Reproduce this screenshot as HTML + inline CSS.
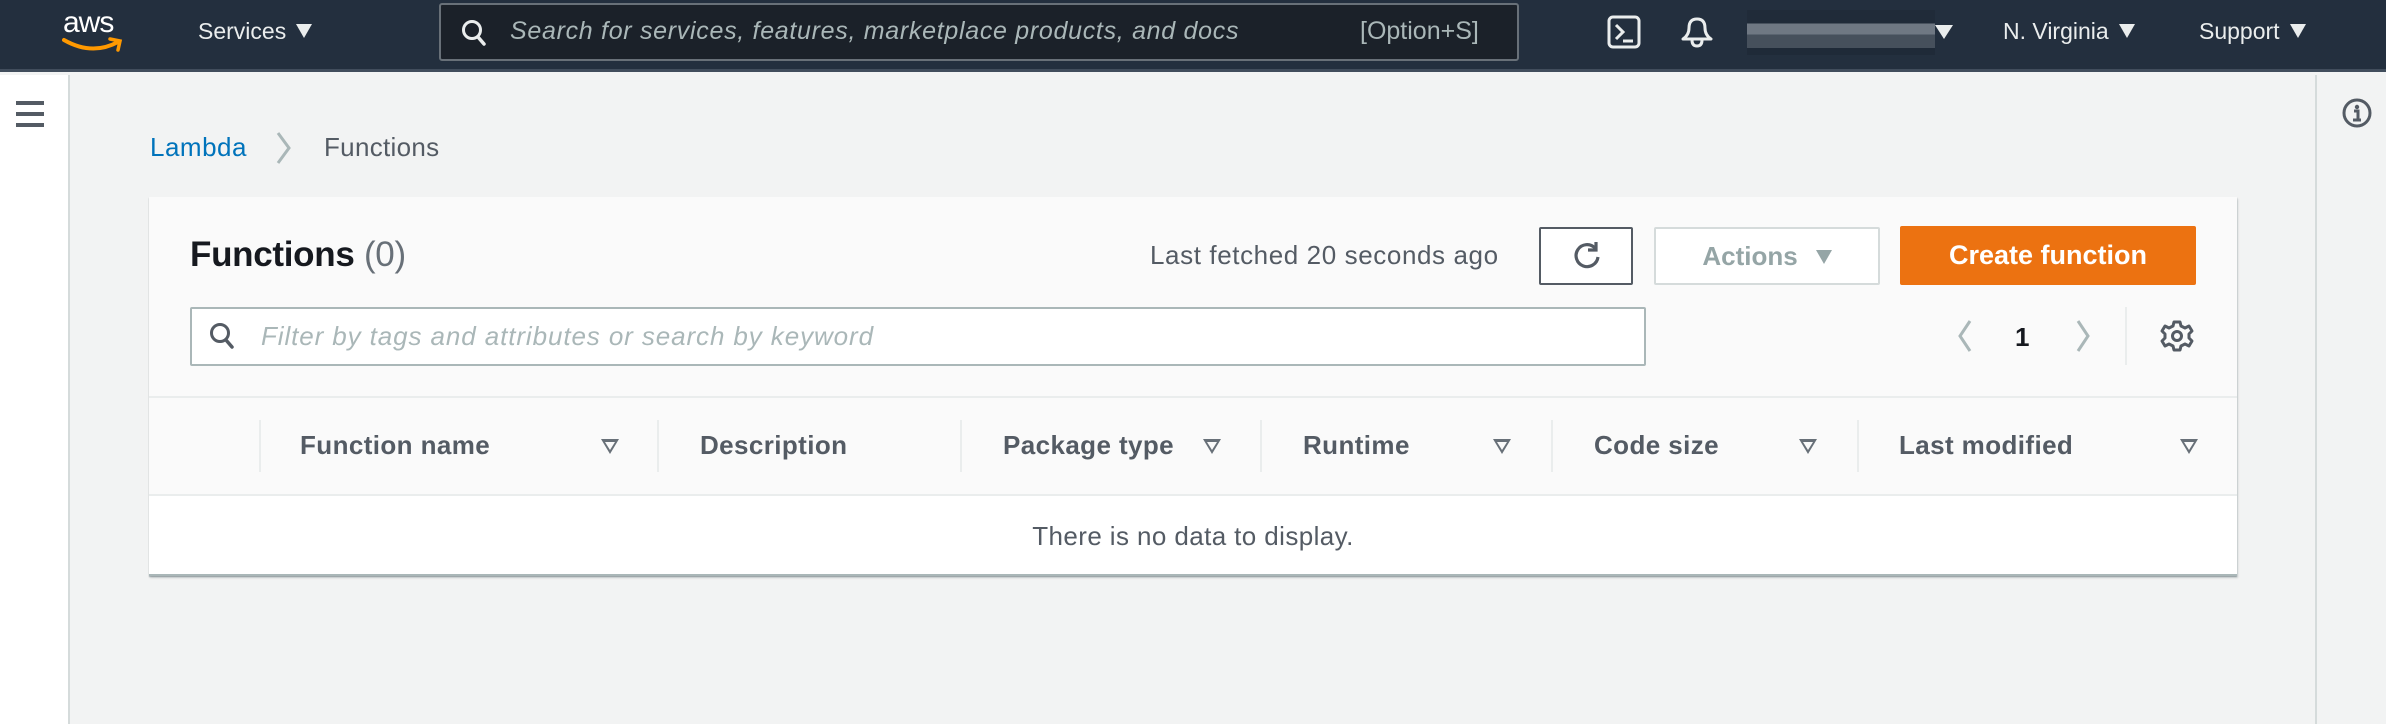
<!DOCTYPE html>
<html><head><meta charset="utf-8"><style>
*{margin:0;padding:0;box-sizing:border-box}
body{width:2386px;height:724px;overflow:hidden;background:#f2f3f3;font-family:"Liberation Sans",sans-serif;position:relative;color:#16191f}
.a{position:absolute;white-space:nowrap}
.nav{position:absolute;left:0;top:0;width:2386px;height:72px;background:#232f3e;border-bottom:3px solid #414d5c}
.nt{color:#eaeded;font-size:23px;top:18px}
.tri{display:inline-block;width:0;height:0;border-left:8px solid transparent;border-right:8px solid transparent;border-top:14px solid currentColor;margin-left:10px;vertical-align:1px}
.hd{font-size:26px;font-weight:bold;color:#545b64;top:430px;letter-spacing:0.4px}
.ft{width:0;height:0;border-left:9px solid transparent;border-right:9px solid transparent;border-top:15px solid #687078;top:439px}
.ft::after{content:"";position:absolute;left:-5px;top:-12px;border-left:5px solid transparent;border-right:5px solid transparent;border-top:8px solid #fafafa}
.sep{width:2px;background:#eaeded;top:420px;height:52px}
</style></head><body>
<div class="nav"></div>
<div class="a" style="left:63px;top:6px;color:#fff;font-size:30px;letter-spacing:-1px">aws</div>
<svg class="a" style="left:62px;top:36px" width="70" height="18" viewBox="0 0 70 18"><path d="M2 4 Q30 20 56 6" stroke="#ff9900" stroke-width="4" fill="none" stroke-linecap="round"/><path d="M48 3 L58 5 L56 14" stroke="#ff9900" stroke-width="3.5" fill="none" stroke-linecap="round"/></svg>
<div class="a nt" style="left:198px">Services<span class="tri"></span></div>
<div class="a" style="left:439px;top:3px;width:1080px;height:58px;background:#1b2129;border:2px solid #687078;border-radius:3px"></div>
<svg class="a" style="left:461px;top:19px" width="26" height="28" viewBox="0 0 26 28"><circle cx="11" cy="11" r="8.5" stroke="#eaeded" stroke-width="3" fill="none"/><path d="M17 18 L23 25" stroke="#eaeded" stroke-width="3.5" stroke-linecap="round"/></svg>
<div class="a" style="left:510px;top:17px;font-size:25px;font-style:italic;color:#aab7b8;letter-spacing:0.7px">Search for services, features, marketplace products, and docs</div>
<div class="a" style="left:1360px;top:17px;font-size:25px;color:#aab7b8">[Option+S]</div>
<svg class="a" style="left:1607px;top:15px" width="35" height="35" viewBox="0 0 35 35"><rect x="2" y="2" width="30" height="30" rx="4" stroke="#eaeded" stroke-width="3" fill="none"/><path d="M9 10 L16 17 L9 24 M16 26 H26" stroke="#eaeded" stroke-width="3" fill="none"/></svg>
<svg class="a" style="left:1680px;top:15px" width="34" height="34" viewBox="0 0 34 34"><path d="M3 24 Q9 20 9 13 Q9 4 17 4 Q25 4 25 13 Q25 20 31 24 Z" stroke="#eaeded" stroke-width="3" fill="none" stroke-linejoin="round"/><path d="M12 25 Q12 31 17 31 Q22 31 22 25" stroke="#eaeded" stroke-width="3" fill="none"/></svg>
<div class="a" style="left:1747px;top:10px;width:188px;height:45px;background:linear-gradient(#202b39 0 30%,#6f7883 30% 55%,#46505c 55% 85%,#1f2a38 85%)"></div>
<div class="a" style="left:1935px;top:25px;border-left:9px solid transparent;border-right:9px solid transparent;border-top:14px solid #eaeded;width:0;height:0"></div>
<div class="a nt" style="left:2003px">N. Virginia<span class="tri"></span></div>
<div class="a nt" style="left:2199px">Support<span class="tri"></span></div>

<div class="a" style="left:0;top:75px;width:70px;height:649px;background:#fff;border-right:2px solid #d5dbdb"></div>
<div class="a" style="left:16px;top:101px;width:28px;height:4px;background:#545b64;box-shadow:0 11px 0 #545b64,0 22px 0 #545b64"></div>
<div class="a" style="left:2315px;top:75px;width:71px;height:649px;background:#f2f3f3;border-left:2px solid #d5dbdb"></div>
<svg class="a" style="left:2341px;top:97px" width="32" height="32" viewBox="0 0 32 32"><circle cx="16" cy="16" r="13" stroke="#545b64" stroke-width="3" fill="none"/><circle cx="16" cy="10" r="2.2" fill="#545b64"/><path d="M13 14 H17 V23 M12 23 H20" stroke="#545b64" stroke-width="3" fill="none"/></svg>

<div class="a" style="left:150px;top:132px;font-size:26px;color:#0073bb;letter-spacing:0.5px">Lambda</div>
<svg class="a" style="left:274px;top:130px" width="20" height="36" viewBox="0 0 20 36"><path d="M4 3 L15 18 L4 33" stroke="#aab7b8" stroke-width="3" fill="none"/></svg>
<div class="a" style="left:324px;top:132px;font-size:26px;color:#545b64;letter-spacing:0.3px">Functions</div>

<div class="a" style="left:149px;top:197px;width:2088px;height:379px;background:#fafafa;box-shadow:0 1px 1px rgba(0,28,36,.3),1px 2px 2px rgba(0,28,36,.15)"></div>
<div class="a" style="left:149px;top:496px;width:2088px;height:80px;background:#fff"></div>
<div class="a" style="left:149px;top:396px;width:2088px;height:2px;background:#eaeded"></div>
<div class="a" style="left:149px;top:494px;width:2088px;height:2px;background:#eaeded"></div>
<div class="a" style="left:149px;top:574px;width:2088px;height:2px;background:#aab7b8"></div>
<div class="a" style="left:190px;top:235px;font-size:35px;font-weight:bold;letter-spacing:-0.3px">Functions <span style="font-weight:normal;color:#687078">(0)</span></div>
<div class="a" style="left:1150px;top:240px;font-size:26px;color:#545b64;letter-spacing:0.6px">Last fetched 20 seconds ago</div>
<div class="a" style="left:1539px;top:227px;width:94px;height:58px;border:2px solid #545b64;border-radius:2px;background:#fff"></div>
<svg class="a" style="left:1571px;top:240px" width="32" height="32" viewBox="0 0 32 32"><path d="M24 8 A11 11 0 1 0 27 17" stroke="#545b64" stroke-width="3.2" fill="none"/><path d="M25 2 V10 H17" stroke="#545b64" stroke-width="3.2" fill="none"/></svg>
<div class="a" style="left:1654px;top:227px;width:226px;height:58px;border:2px solid #d5dbdb;border-radius:2px;background:#fff;color:#95a5a6;font-size:26px;font-weight:bold;text-align:center;line-height:54px">Actions<span class="tri" style="margin-left:18px"></span></div>
<div class="a" style="left:1900px;top:226px;width:296px;height:59px;background:#ec7211;border-radius:2px;color:#fff;font-size:27px;font-weight:bold;text-align:center;line-height:59px">Create function</div>

<div class="a" style="left:190px;top:307px;width:1456px;height:59px;background:#fff;border:2px solid #aab7b8;border-radius:2px"></div>
<svg class="a" style="left:209px;top:322px" width="26" height="28" viewBox="0 0 26 28"><circle cx="11" cy="11" r="8.5" stroke="#545b64" stroke-width="3" fill="none"/><path d="M17 18 L23 25" stroke="#545b64" stroke-width="3.5" stroke-linecap="round"/></svg>
<div class="a" style="left:261px;top:321px;font-size:26px;font-style:italic;color:#aab7b8;letter-spacing:0.9px">Filter by tags and attributes or search by keyword</div>
<svg class="a" style="left:1955px;top:318px" width="20" height="36" viewBox="0 0 20 36"><path d="M15 3 L5 18 L15 33" stroke="#aab7b8" stroke-width="3" fill="none"/></svg>
<div class="a" style="left:2015px;top:322px;font-size:26px;font-weight:bold">1</div>
<svg class="a" style="left:2073px;top:318px" width="20" height="36" viewBox="0 0 20 36"><path d="M5 3 L15 18 L5 33" stroke="#aab7b8" stroke-width="3" fill="none"/></svg>
<div class="a" style="left:2125px;top:307px;width:2px;height:58px;background:#eaeded"></div>
<svg class="a" style="left:2160px;top:319px" width="34" height="34" viewBox="0 0 34 34"><g stroke="#545b64" stroke-width="3" fill="none"><circle cx="17" cy="17" r="4.5"/><path d="M14 3 H20 L21 7 L25 9 L29 7 L32 12 L29 15 V19 L32 22 L29 27 L25 25 L21 27 L20 31 H14 L13 27 L9 25 L5 27 L2 22 L5 19 V15 L2 12 L5 7 L9 9 L13 7 Z" stroke-linejoin="round"/></g></svg>

<div class="a sep" style="left:259px"></div>
<div class="a sep" style="left:657px"></div>
<div class="a sep" style="left:960px"></div>
<div class="a sep" style="left:1260px"></div>
<div class="a sep" style="left:1551px"></div>
<div class="a sep" style="left:1857px"></div>
<div class="a hd" style="left:300px">Function name</div>
<div class="a hd" style="left:700px">Description</div>
<div class="a hd" style="left:1003px">Package type</div>
<div class="a hd" style="left:1303px">Runtime</div>
<div class="a hd" style="left:1594px">Code size</div>
<div class="a hd" style="left:1899px">Last modified</div>
<div class="a ft" style="left:601px"></div>
<div class="a ft" style="left:1203px"></div>
<div class="a ft" style="left:1493px"></div>
<div class="a ft" style="left:1799px"></div>
<div class="a ft" style="left:2180px"></div>
<div class="a" style="left:149px;width:2088px;top:521px;text-align:center;font-size:26px;color:#545b64;letter-spacing:0.4px">There is no data to display.</div>
</body></html>
